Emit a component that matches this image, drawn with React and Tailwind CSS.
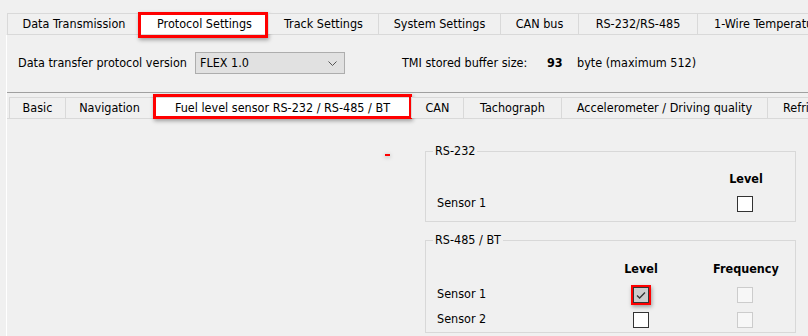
import React from "react";

const topTabs = [
  { label: "Data Transmission", w: "w-[133px]" },
  { label: "Protocol Settings", w: "w-[128px]", selected: true },
  { label: "Track Settings", w: "w-[110px]" },
  { label: "System Settings", w: "w-[122px]" },
  { label: "CAN bus", w: "w-[78px]" },
  { label: "RS-232/RS-485", w: "w-[119px]" },
];

const subTabs = [
  { label: "Basic", w: "w-[56px]" },
  { label: "Navigation", w: "w-[88px]" },
  { label: "Fuel level sensor RS-232 / RS-485 / BT", w: "w-[258px]", selected: true },
  { label: "CAN", w: "w-[52px]" },
  { label: "Tachograph", w: "w-[98px]" },
  { label: "Accelerometer / Driving quality", w: "w-[206px]" },
];

function Tab({ label, w, selected, overlay }) {
  return (
    <div
      className={`relative ${w} h-[21px] pt-[1px] shrink-0 flex items-center justify-center whitespace-nowrap border-t border-l border-[#d9d9d9] ${
        selected ? "bg-white" : "bg-[#f0f0f0]"
      }`}
    >
      {label}
      {selected && overlay}
    </div>
  );
}

function Box({ kind }) {
  if (kind === "disabled")
    return <div className="w-[16px] h-[16px] border border-[#cccccc] bg-[#f7f7f7]" />;
  if (kind === "checked")
    return (
      <div className="relative w-[16px] h-[16px] border border-[#333333] bg-[#cccccc]">
        <svg width="14" height="14" viewBox="0 0 14 14" className="block">
          <polyline points="3,7.5 5.6,10 11,4.5" fill="none" stroke="#333" strokeWidth="1.3" />
        </svg>
        <div className="absolute -left-[3px] -top-[3px] w-[20px] h-[20px] border-2 border-[#ff0000] shadow-[1px_2px_4px_rgba(0,0,0,0.35)]" />
      </div>
    );
  return <div className="w-[16px] h-[16px] border border-[#333333] bg-white" />;
}

function Group({ title, className, children }) {
  return (
    <div className={`relative w-[371px] border border-[#d8d8d8] ${className}`}>
      <div className="absolute top-[-9px] left-[7px] px-[2px] leading-[16px] bg-[#f0f0f0]">{title}</div>
      {children}
    </div>
  );
}

export default function App() {
  return (
    <div className="w-[808px] h-[336px] overflow-hidden bg-[#f0f0f0] text-[12.5px] text-black font-['DejaVu_Sans_Condensed','DejaVu_Sans',sans-serif]">
      {/* top tabs */}
      <div className="flex pt-[13px] pl-[7px]">
        {topTabs.map((t) => (
          <Tab
            key={t.label}
            {...t}
            overlay={
              <div className="absolute left-[-3px] top-[-2px] w-[130px] h-[26px] border-[3px] border-[#ff0000] shadow-[1px_2px_4px_rgba(0,0,0,0.35)]" />
            }
          />
        ))}
        <div className="w-[150px] h-[21px] pt-[1px] shrink-0 flex items-center pl-[16px] whitespace-nowrap border-t border-l border-[#d9d9d9]">
          1-Wire Temperature
        </div>
      </div>

      {/* pane */}
      <div className="ml-[6px] h-[302px] border-l border-white border-t border-t-[#d9d9d9]">
        <div className="flex items-center h-[22px] mt-[17px] pl-[11px] whitespace-nowrap">
          <div className="w-[177px]">Data transfer protocol version</div>
          <div className="w-[150px] h-[22px] border border-[#adadad] bg-[#e1e1e1] flex items-center justify-between pl-[4px] pr-[7px]">
            <span>FLEX 1.0</span>
            <svg width="9" height="5" viewBox="0 0 9 5">
              <polyline points="0.5,0.5 4.5,4.5 8.5,0.5" fill="none" stroke="#555" strokeWidth="1" />
            </svg>
          </div>
          <div className="ml-[57px] w-[145px]">TMI stored buffer size:</div>
          <div className="w-[30px] font-bold">93</div>
          <div>byte (maximum 512)</div>
        </div>

        <div className="mt-[18px] border-t border-[#a0a0a0] pt-[4px]">
          <div className="flex pl-[2px]">
            {subTabs.map((t) => (
              <Tab
                key={t.label}
                {...t}
                overlay={
                  <div className="absolute left-[-1px] top-[-4px] w-[259px] h-[25px] border-[3px] border-[#ff0000] shadow-[1px_2px_4px_rgba(0,0,0,0.35)]" />
                }
              />
            ))}
            <div className="w-[120px] h-[21px] pt-[1px] shrink-0 flex items-center pl-[15px] whitespace-nowrap border-t border-l border-[#d9d9d9]">
              Refrigerator
            </div>
          </div>

          <div className="flex border-t border-[#d9d9d9]">
            <div className="w-[418px] shrink-0 pt-[35px] pl-[378px]">
              <div className="w-[5px] h-[2px] bg-[#ff0000] shadow-[0_1px_4px_rgba(0,0,0,0.35)]" />
            </div>
            <div className="pt-[32px]">
              <Group title="RS-232">
                <div className="grid grid-cols-[148px_100px_98px] gap-x-[6px] pl-[11px] pt-[19px] pb-[5px]">
                  <div className="h-[16px] mb-[4px]" />
                  <div className="h-[16px] mb-[4px]" />
                  <div className="h-[16px] mb-[4px] flex items-center justify-center font-bold">Level</div>
                  <div className="h-[25px] flex items-center">Sensor 1</div>
                  <div className="h-[25px]" />
                  <div className="h-[25px] flex items-center justify-center pr-[2px]">
                    <Box />
                  </div>
                </div>
              </Group>

              <Group title="RS-485 / BT" className="mt-[18px]">
                <div className="grid grid-cols-[148px_100px_98px] gap-x-[6px] pl-[11px] pt-[20px]">
                  <div className="h-[16px] mb-[5px]" />
                  <div className="h-[16px] mb-[5px] flex items-center justify-center font-bold">Level</div>
                  <div className="h-[16px] mb-[5px] flex items-center justify-center font-bold">Frequency</div>
                  <div className="h-[25px] flex items-center">Sensor 1</div>
                  <div className="h-[25px] flex items-center justify-center">
                    <Box kind="checked" />
                  </div>
                  <div className="h-[25px] flex items-center justify-center pr-[2px]">
                    <Box kind="disabled" />
                  </div>
                  <div className="h-[25px] flex items-center">Sensor 2</div>
                  <div className="h-[25px] flex items-center justify-center">
                    <Box />
                  </div>
                  <div className="h-[25px] flex items-center justify-center pr-[2px]">
                    <Box kind="disabled" />
                  </div>
                </div>
              </Group>
            </div>
          </div>
        </div>
      </div>
    </div>
  );
}
